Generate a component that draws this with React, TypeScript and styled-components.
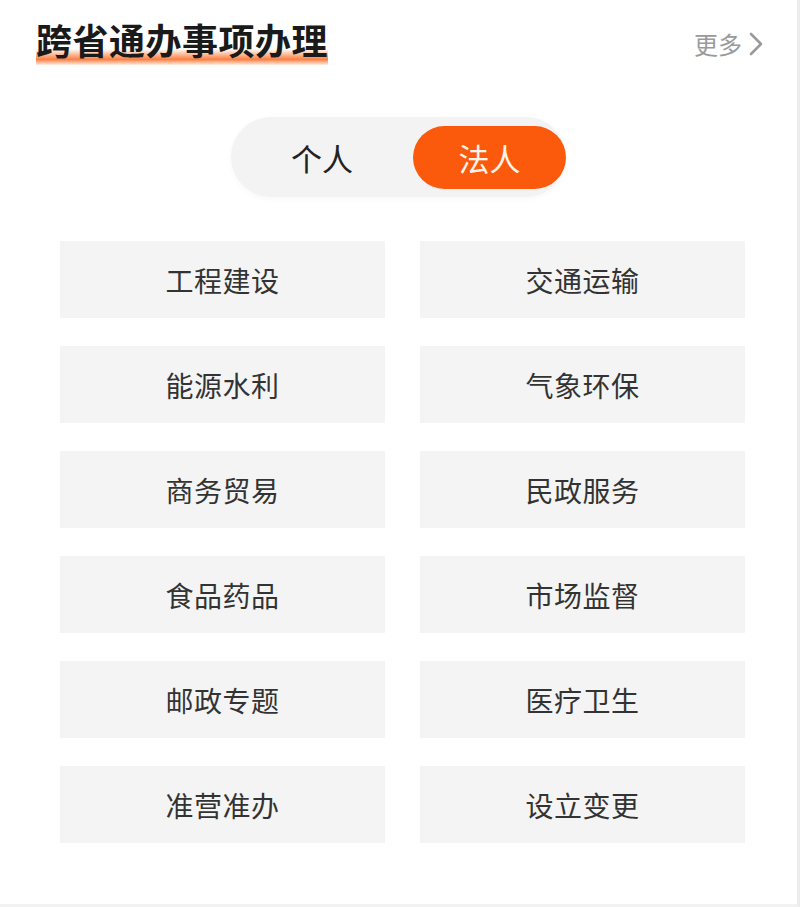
import styled, { createGlobalStyle } from 'styled-components';

const GlobalStyle = createGlobalStyle`
  html, body {
    margin: 0;
    padding: 0;
    background: #ffffff;
  }
  body {
    font-family: "Noto Sans CJK SC", "Noto Sans", sans-serif;
  }
`;

const Page = styled.div({
  width: 797,
  height: 904,
  background: '#ffffff',
  borderRight: '3px solid #ececec',
  borderBottom: '3px solid #f2f2f2',
  display: 'flex',
  flexDirection: 'column',
});

const Header = styled.div({
  display: 'flex',
  flexDirection: 'row',
  alignItems: 'flex-start',
  justifyContent: 'space-between',
  paddingTop: 18,
  paddingLeft: 36,
  paddingRight: 33,
});

const Title = styled.h1({
  margin: 0,
  fontSize: 36,
  lineHeight: '42px',
  fontWeight: 700,
  color: '#1a1a1a',
  letterSpacing: 0.5,
  background: 'linear-gradient(to top, rgba(255, 170, 120, 0.2), rgba(250, 105, 35, 0.85) 35%, rgba(250, 120, 50, 0.45) 70%, rgba(255, 160, 100, 0))',
  backgroundSize: '100% 16px',
  backgroundPosition: 'left bottom',
  backgroundRepeat: 'no-repeat',
  paddingBottom: 5,
});

const MoreLink = styled.a({
  display: 'flex',
  alignItems: 'center',
  gap: 6,
  marginTop: 8,
  fontSize: 24,
  color: '#9a9a9a',
  textDecoration: 'none',
  cursor: 'pointer',
});

const ToggleRow = styled.div({
  display: 'flex',
  justifyContent: 'center',
  marginTop: 52,
});

const Toggle = styled.div({
  display: 'flex',
  alignItems: 'center',
  width: 335,
  height: 80,
  borderRadius: 40,
  background: '#f3f3f3',
  boxShadow: '0 2px 6px rgba(0, 0, 0, 0.03)',
});

const ToggleOption = styled.button<{ $active?: boolean; $width: number }>((props) => ({
  width: props.$width,
  height: 63,
  border: 'none',
  borderRadius: 32,
  padding: 0,
  background: props.$active ? '#fb5a0c' : 'transparent',
  color: props.$active ? '#fff4ea' : '#222222',
  fontFamily: '"Noto Sans CJK SC", "Noto Sans", sans-serif',
  fontSize: 31,
  cursor: 'pointer',
}));

const Grid = styled.div({
  display: 'grid',
  gridTemplateColumns: '325px 325px',
  columnGap: 35,
  rowGap: 28,
  marginTop: 44,
  paddingLeft: 60,
});

const Cell = styled.div({
  height: 77,
  display: 'flex',
  alignItems: 'center',
  justifyContent: 'center',
  background: '#f4f4f4',
  fontSize: 28,
  color: '#333333',
  letterSpacing: 0.5,
});

const items = [
  '工程建设', '交通运输',
  '能源水利', '气象环保',
  '商务贸易', '民政服务',
  '食品药品', '市场监督',
  '邮政专题', '医疗卫生',
  '准营准办', '设立变更',
];

function ChevronRight() {
  return (
    <svg width="16" height="26" viewBox="0 0 16 26" fill="none">
      <polyline points="3,3 13,13 3,23" stroke="#9a9a9a" strokeWidth="2.6" strokeLinecap="round" strokeLinejoin="round" />
    </svg>
  );
}

export default function App() {
  return (
    <>
      <GlobalStyle />
      <Page>
        <Header>
          <Title>跨省通办事项办理</Title>
          <MoreLink>
            更多
            <ChevronRight />
          </MoreLink>
        </Header>

        <ToggleRow>
          <Toggle>
            <ToggleOption $width={182}>个人</ToggleOption>
            <ToggleOption $width={153} $active>法人</ToggleOption>
          </Toggle>
        </ToggleRow>

        <Grid>
          {items.map((item) => (
            <Cell key={item}>{item}</Cell>
          ))}
        </Grid>
      </Page>
    </>
  );
}
